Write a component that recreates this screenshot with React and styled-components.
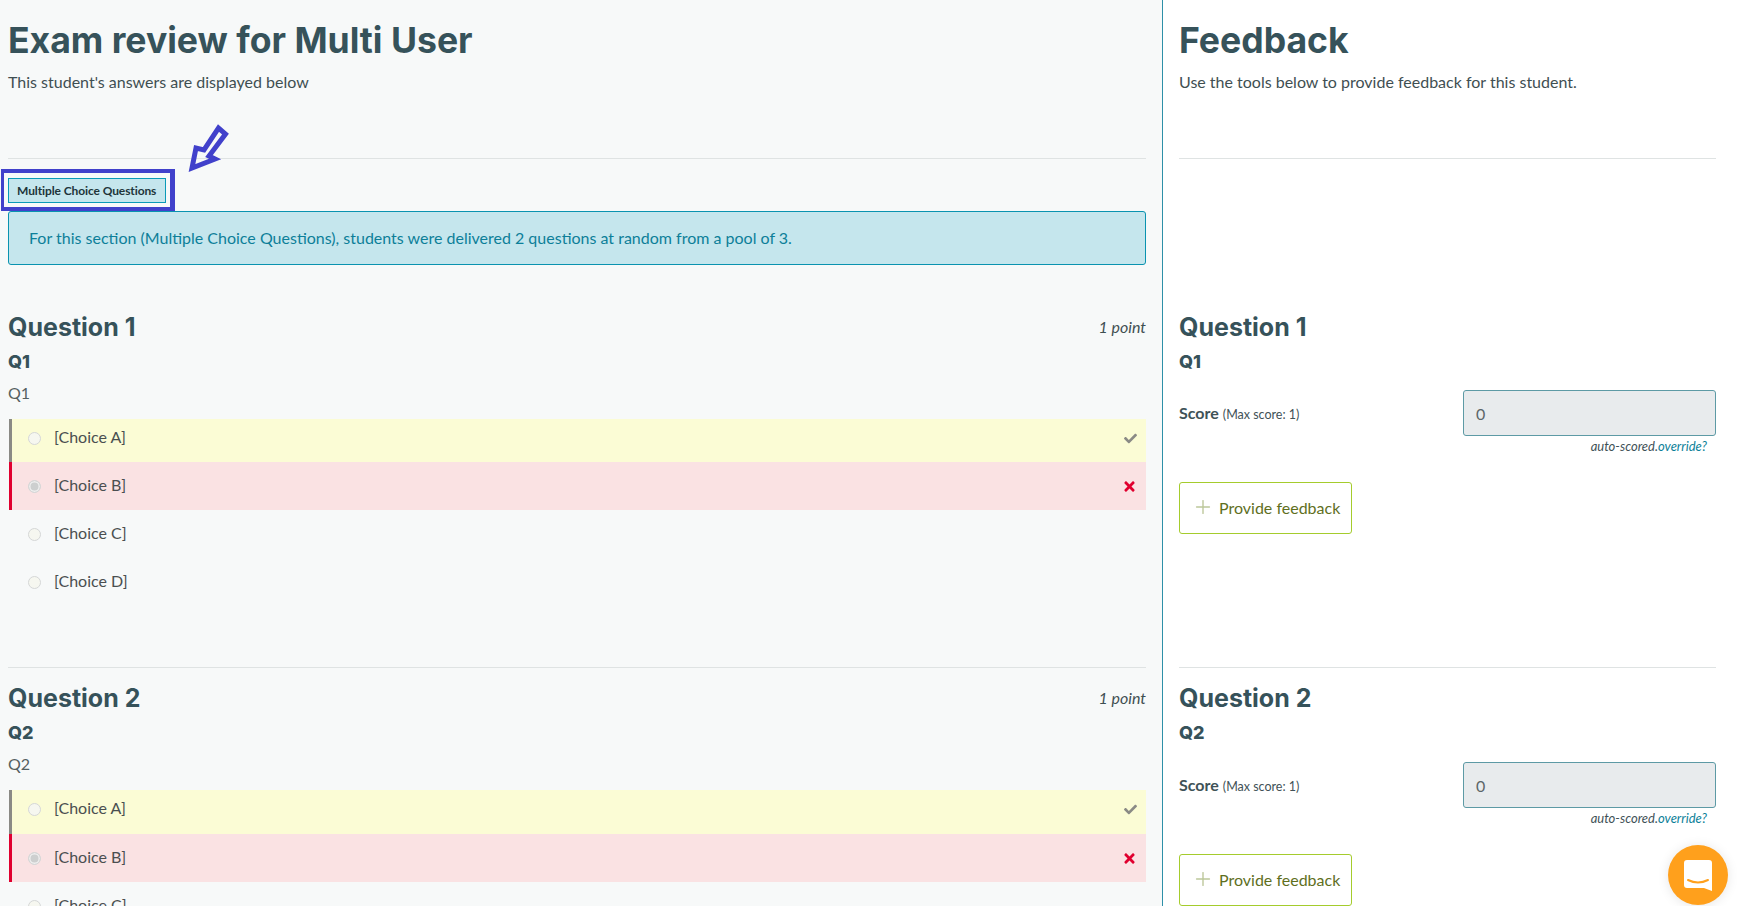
import React from 'react';
import styled, { createGlobalStyle } from 'styled-components';
import { Plus } from 'lucide-react';
import { FaCheck, FaTimes } from 'react-icons/fa';

const GlobalStyle = createGlobalStyle`
  html, body {
    margin: 0;
    height: 906px;
    overflow: hidden;
    background: #fff;
    font-family: "Lato", "Liberation Sans", sans-serif;
    color: #3f4a4c;
  }
`;

const Page = styled.div`
  display: grid;
  grid-template-columns: 1163px 1fr;
  height: 906px;
  overflow: hidden;
`;

const Column = styled.div`
  padding: ${(p) => (p.$side === 'left' ? '0 16px 0 8px' : '0 31px 0 16px')};
  background: ${(p) => (p.$side === 'left' ? '#f7f9f9' : '#fff')};
  border-right: ${(p) => (p.$side === 'left' ? '1px solid #2e90a8' : 'none')};
`;

const Header = styled.header`
  height: 159px;
  border-bottom: 1px solid #dfe3e3;
  padding-top: 18px;
  box-sizing: border-box;
`;

const Title = styled.h1`
  margin: 0;
  font-family: "Inter", sans-serif;
  font-size: 35.6px;
  line-height: 46px;
  font-weight: 700;
  color: #36525a;
`;

const Sub = styled.p`
  margin: 7px 0 0;
  font-size: 16px;
  line-height: 22px;
  color: #3f4f52;
`;

const TagRow = styled.div`
  position: relative;
  height: 52px;
  display: flex;
  align-items: flex-start;
  padding-top: 19px;
  box-sizing: border-box;
`;

const Tag = styled.span`
  box-sizing: border-box;
  height: 25px;
  width: 158px;
  padding: 0 8px;
  display: inline-flex;
  align-items: center;
  white-space: nowrap;
  font-size: 12px;
  font-weight: 700;
  letter-spacing: -0.1px;
  color: #20353a;
  background: #c5e6ed;
  border: 1px solid #0a9ab8;
`;

const TagFrame = styled.span`
  position: absolute;
  left: -7px;
  top: 10px;
  box-sizing: border-box;
  width: 174px;
  height: 42px;
  border: solid #4141cb;
  border-width: 4px 5px 4px 3px;
`;

const Arrow = styled.svg`
  position: absolute;
  left: 180px;
  top: -35px;
`;

const Alert = styled.div`
  box-sizing: border-box;
  height: 54px;
  padding: 0 20px 2px;
  display: flex;
  align-items: center;
  font-size: 16px;
  color: #0d7f99;
  background: #c5e6ed;
  border: 1px solid #0a93b0;
  border-radius: 3px;
`;

const QuestionBlock = styled.section`
  height: ${(p) => p.$height}px;
  padding-top: ${(p) => p.$top}px;
  box-sizing: border-box;
  border-bottom: ${(p) => (p.$line ? '1px solid #dfe3e3' : 'none')};
`;

const QuestionHead = styled.div`
  display: flex;
  justify-content: space-between;
  align-items: center;
`;

const QuestionTitle = styled.h2`
  margin: 0;
  font-family: "Inter", sans-serif;
  font-size: 25px;
  line-height: 34px;
  font-weight: 700;
  color: #36525a;
`;

const Points = styled.span`
  font-size: 16px;
  font-style: italic;
  margin-top: -2px;
  color: #3f4f52;
`;

const QuestionName = styled.h3`
  margin: 3px 0 0;
  font-family: "Inter", sans-serif;
  font-size: 18px;
  line-height: 30px;
  font-weight: 800;
  color: #36525a;
`;

const Body = styled.p`
  margin: 4px 0 0;
  height: 38px;
  font-size: 16px;
  line-height: 24px;
  color: #555f61;
`;

const Choices = styled.ul`
  list-style: none;
  margin: 0;
  padding: 0;
`;

const Choice = styled.li`
  box-sizing: border-box;
  height: ${(p) => p.$height || 48}px;
  padding: 0 9px ${(p) => (p.$kind === 'key' ? 9 : 4)}px 16px;
  display: flex;
  align-items: center;
  font-size: 16px;
  color: #4a4f50;
  background: ${(p) => (p.$kind === 'key' ? '#fbfcd5' : p.$kind === 'wrong' ? '#fae2e3' : 'transparent')};
  border-left: 3px solid ${(p) => (p.$kind === 'key' ? '#8a8a85' : p.$kind === 'wrong' ? '#e0002f' : 'transparent')};
  margin-left: 1px;
`;

const Radio = styled.span`
  box-sizing: border-box;
  width: 13px;
  height: 13px;
  border-radius: 50%;
  margin: 4px 13px 0 0;
  border: 1px solid #d5d7d7;
  background: ${(p) => (p.$selected ? '#cdcfcf' : '#f6f7f0')};
  box-shadow: ${(p) => (p.$selected ? 'inset 0 0 0 1.5px #efeeee' : 'none')};
`;

const ChoiceLabel = styled.span`
  flex: 1;
`;

const ChoiceMark = styled.span`
  display: flex;
  margin-top: 4px;
`;

const ScoreRow = styled.div`
  display: flex;
  justify-content: space-between;
  align-items: center;
  margin-top: ${(p) => p.$gap}px;
`;

const ScoreLabel = styled.div`
  margin-top: -2px;
  font-size: 16px;
  font-weight: 700;
  color: #3f5257;
`;

const MaxScore = styled.span`
  font-size: 12.5px;
  font-weight: 400;
  margin-left: 4px;
`;

const ScoreInput = styled.div`
  box-sizing: border-box;
  width: 253px;
  height: 46px;
  padding: 0 12px;
  display: flex;
  align-items: center;
  font-size: 16px;
  color: #5c6668;
  background: #e8ebed;
  border: 1px solid #5d9aa5;
  border-radius: 3px;
`;

const AutoScored = styled.div`
  margin: 2px 9px 0 0;
  text-align: right;
  font-size: 13px;
  line-height: 16px;
  font-style: italic;
  color: #3f5257;
`;

const Override = styled.a`
  color: #0d7f99;
`;

const FeedbackButton = styled.button`
  box-sizing: border-box;
  margin-top: 28px;
  width: 173px;
  height: 52px;
  display: flex;
  align-items: center;
  gap: 5px;
  padding: 0 0 2px 12px;
  font-family: inherit;
  font-size: 16px;
  color: #5f6f1e;
  background: #fff;
  border: 1px solid #a5cc2d;
  border-radius: 3px;
  white-space: nowrap;
`;

const ChatBubble = styled.div`
  position: fixed;
  right: 19px;
  bottom: 1px;
  width: 60px;
  height: 60px;
  border-radius: 50%;
  background: #ffa01c;
  box-shadow: 0 1px 12px rgba(0, 0, 0, 0.1);
  display: flex;
  align-items: center;
  justify-content: center;
`;

const QuestionChoices = ({ keyHeight, limit }) => (
  <Choices>
    <Choice $kind="key" $height={keyHeight}>
      <Radio />
      <ChoiceLabel>[Choice A]</ChoiceLabel>
      <ChoiceMark>
        <FaCheck size={13} color="#8a8a85" />
      </ChoiceMark>
    </Choice>
    <Choice $kind="wrong">
      <Radio $selected />
      <ChoiceLabel>[Choice B]</ChoiceLabel>
      <ChoiceMark>
        <FaTimes size={15} color="#e0002f" />
      </ChoiceMark>
    </Choice>
    <Choice>
      <Radio />
      <ChoiceLabel>[Choice C]</ChoiceLabel>
    </Choice>
    {limit ? null : (
      <Choice>
        <Radio />
        <ChoiceLabel>[Choice D]</ChoiceLabel>
      </Choice>
    )}
  </Choices>
);

const FeedbackForm = ({ gap }) => (
  <>
    <ScoreRow $gap={gap}>
      <ScoreLabel>
        Score<MaxScore>(Max score: 1)</MaxScore>
      </ScoreLabel>
      <ScoreInput>0</ScoreInput>
    </ScoreRow>
    <AutoScored>
      auto-scored.<Override>override?</Override>
    </AutoScored>
    <FeedbackButton>
      <Plus size={22} strokeWidth={1.5} color="#bcc79a" />
      Provide feedback
    </FeedbackButton>
  </>
);

export default function App() {
  return (
    <Page>
      <GlobalStyle />
      <Column $side="left">
        <Header>
          <Title>Exam review for Multi User</Title>
          <Sub>This student's answers are displayed below</Sub>
        </Header>
        <TagRow>
          <Tag>Multiple Choice Questions</Tag>
          <TagFrame />
          <Arrow width="44" height="50" viewBox="0 0 44 50">
            <path
              d="M4 44 L8 24 L16 26 L30.5 4 L37.5 10 L21 32 L27 35 Z"
              fill="none"
              stroke="#4141cb"
              strokeWidth="5"
            />
          </Arrow>
        </TagRow>
        <Alert>
          For this section (Multiple Choice Questions), students were delivered 2 questions at random from a pool of 3.
        </Alert>
        <QuestionBlock $height={403} $top={45} $line>
          <QuestionHead>
            <QuestionTitle>Question 1</QuestionTitle>
            <Points>1 point</Points>
          </QuestionHead>
          <QuestionName>Q1</QuestionName>
          <Body>Q1</Body>
          <QuestionChoices keyHeight={43} />
        </QuestionBlock>
        <QuestionBlock $height={239} $top={13}>
          <QuestionHead>
            <QuestionTitle>Question 2</QuestionTitle>
            <Points>1 point</Points>
          </QuestionHead>
          <QuestionName>Q2</QuestionName>
          <Body>Q2</Body>
          <QuestionChoices keyHeight={44} limit />
        </QuestionBlock>
      </Column>
      <Column $side="right">
        <Header>
          <Title>Feedback</Title>
          <Sub>Use the tools below to provide feedback for this student.</Sub>
        </Header>
        <QuestionBlock $height={509} $top={151} $line>
          <QuestionTitle>Question 1</QuestionTitle>
          <QuestionName>Q1</QuestionName>
          <FeedbackForm gap={13} />
        </QuestionBlock>
        <QuestionBlock $height={239} $top={13}>
          <QuestionTitle>Question 2</QuestionTitle>
          <QuestionName>Q2</QuestionName>
          <FeedbackForm gap={14} />
        </QuestionBlock>
      </Column>
      <ChatBubble>
        <svg width="28" height="31" viewBox="0 0 28 31">
          <path d="M3 0 H25 A3 3 0 0 1 28 3 V31 L20 28 H3 A3 3 0 0 1 0 25 V3 A3 3 0 0 1 3 0 Z" fill="#fff" />
          <path d="M4 20 Q14 25 24 20" fill="none" stroke="#ffa01c" strokeWidth="2" strokeLinecap="round" />
        </svg>
      </ChatBubble>
    </Page>
  );
}
